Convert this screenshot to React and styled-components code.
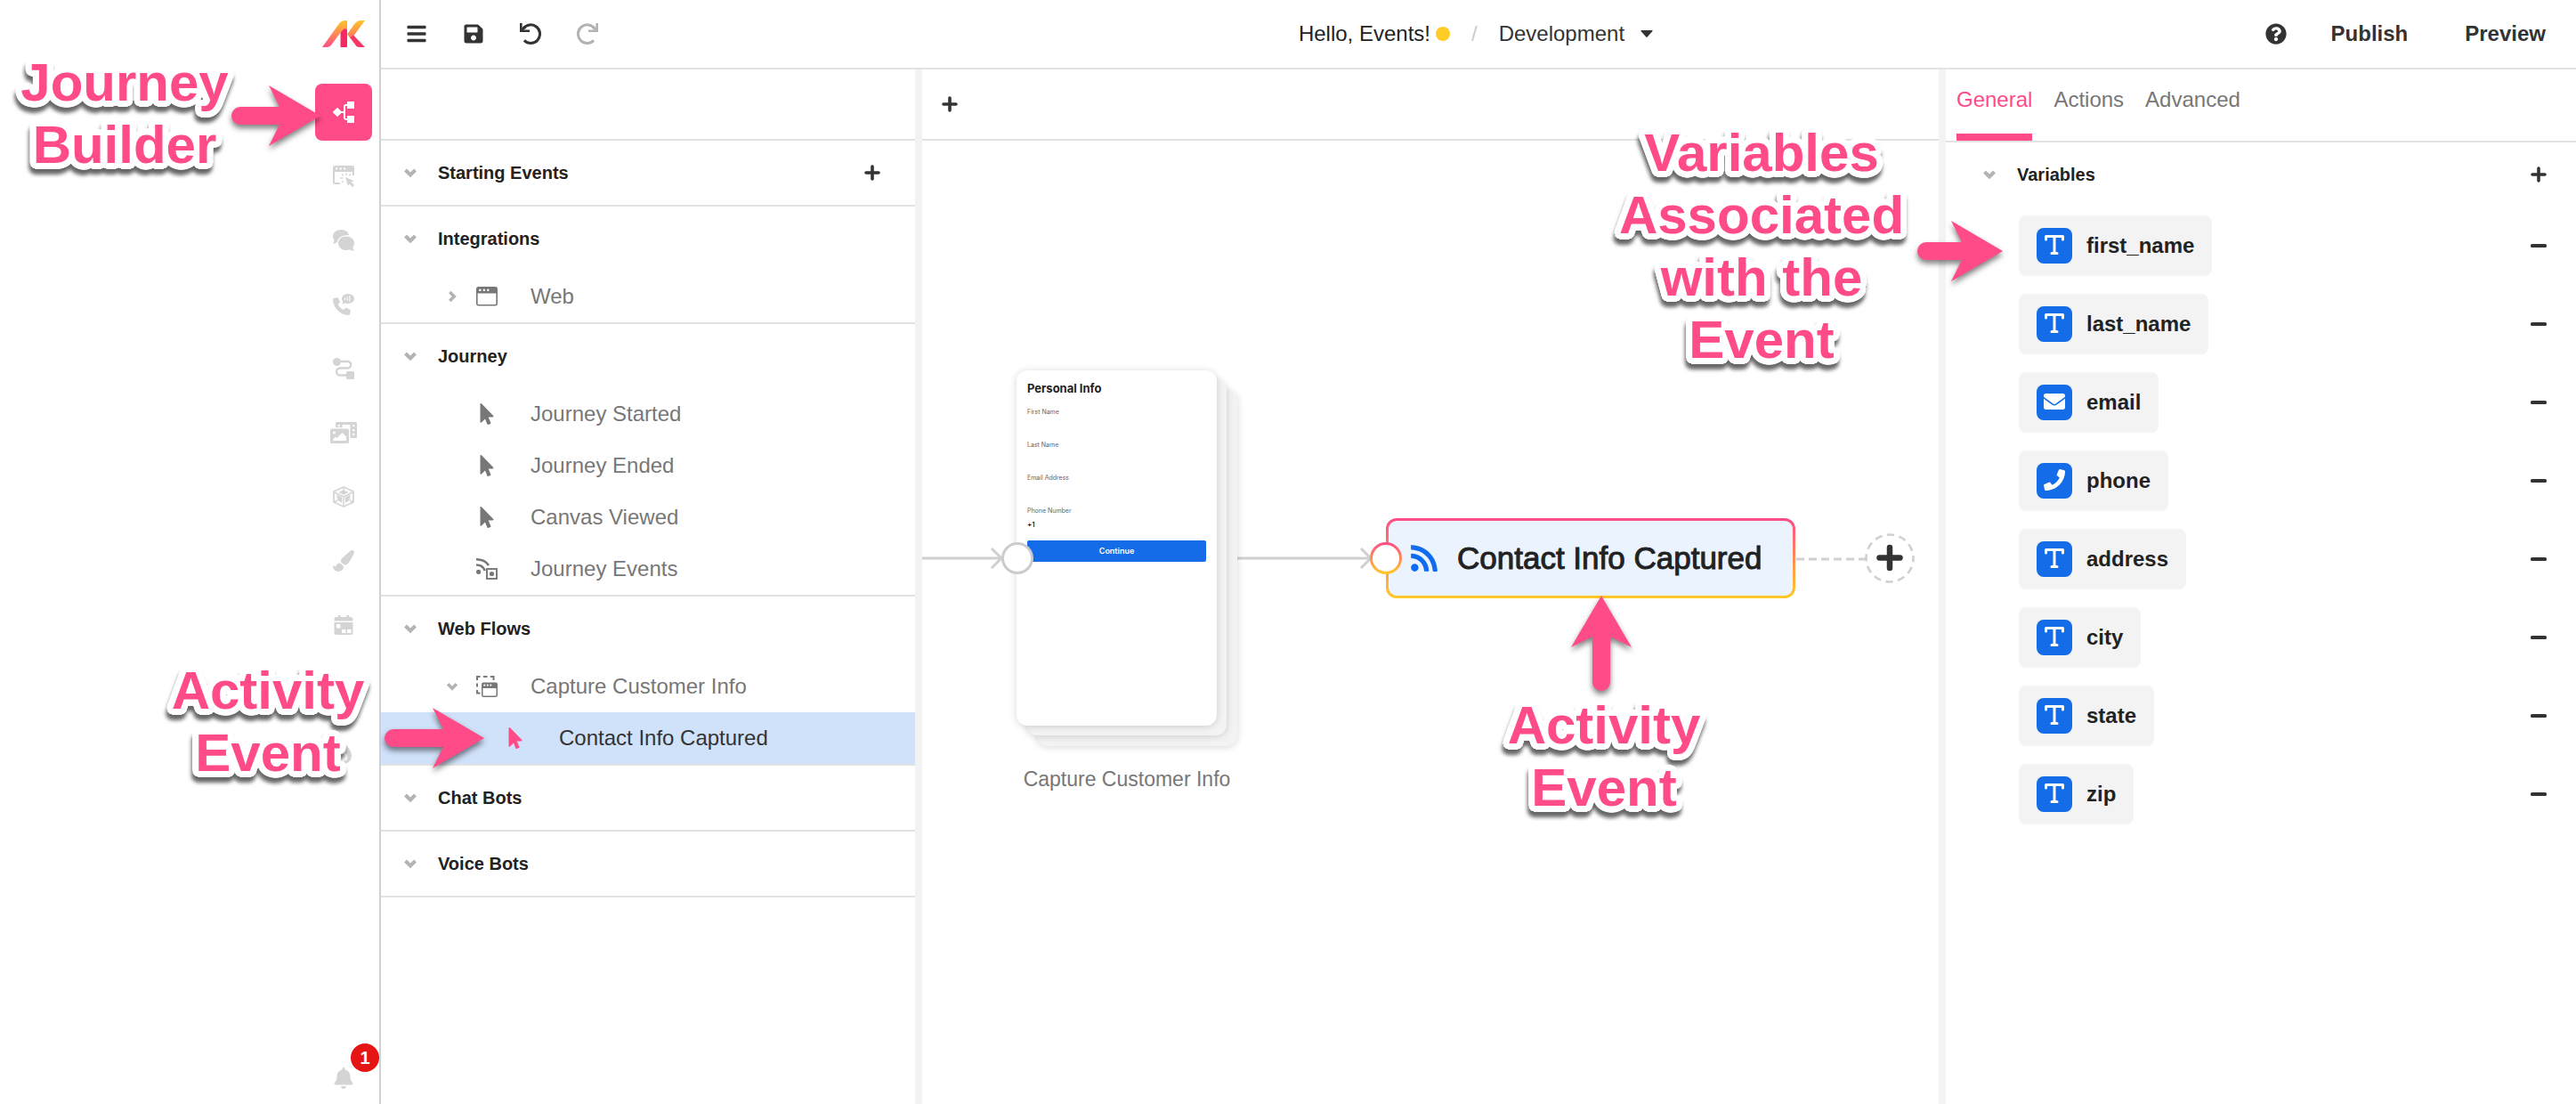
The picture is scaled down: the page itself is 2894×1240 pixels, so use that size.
import React from 'react';
import styled, { createGlobalStyle, css } from 'styled-components';
import {
  FaBars,
  FaBell,
  FaBurn,
  FaEnvelope,
  FaMousePointer,
  FaPaintBrush,
  FaPhone,
  FaPhotoVideo,
  FaQuestionCircle,
  FaRss,
  FaSave,
  FaUsers,
} from 'react-icons/fa';

const color = {
  pink: '#ff4b87',
  yellow: '#ffcb25',
  blue: '#146ce8',
  ink: '#222222',
  text: '#333333',
  muted: '#777777',
  faint: '#b3b3b3',
  rail: '#d4d4d4',
  line: '#e3e3e3',
  wire: '#d0d0d0',
  surface: '#f3f3f3',
};

const GlobalStyle = createGlobalStyle`
  *, *::before, *::after { box-sizing: border-box; }
  body {
    margin: 0;
    background: #fff;
    color: ${color.text};
    font-family: "Liberation Sans", Arial, Helvetica, sans-serif;
    font-size: 24px;
    line-height: 28px;
  }
  button, input, select { font: inherit; color: inherit; }
  button { background: none; border: 0; padding: 0; cursor: pointer; }
  svg { display: block; flex: none; }
`;

/* ---------- page frame ---------- */

const Page = styled.div`
  position: relative;
  display: grid;
  grid-template-columns: 428px minmax(0, 1fr);
  min-height: 100vh;
  overflow: hidden;
`;

const Rail = styled.nav`
  display: flex;
  flex-direction: column;
  align-items: flex-end;
  gap: 8px;
  padding-right: 8px;
  border-right: 2px solid ${color.wire};
`;

const LogoLink = styled.a`
  display: grid;
  place-items: center;
  width: 64px;
  height: 76px;
  margin-bottom: 10px;
`;

const RailButton = styled.button`
  display: grid;
  place-items: center;
  width: 64px;
  height: 64px;
  border-radius: 8px;
  color: ${(p) => (p.$active ? '#fff' : color.rail)};
  background: ${(p) => (p.$active ? color.pink : 'transparent')};
`;

const BellButton = styled(RailButton)`
  position: relative;
  height: 58px;
  margin-top: auto;
`;

const Badge = styled.span`
  position: absolute;
  right: -8px;
  bottom: 36px;
  display: grid;
  place-items: center;
  width: 32px;
  height: 32px;
  border-radius: 50%;
  background: #e51515;
  color: #fff;
  font-size: 20px;
  font-weight: 700;
  line-height: 20px;
`;

const Workspace = styled.div`
  display: flex;
  flex-direction: column;
  min-width: 0;
`;

/* ---------- top bar ---------- */

const TopBar = styled.header`
  display: grid;
  grid-template-columns: 1fr auto 1fr;
  align-items: center;
  height: 78px;
  padding: 0 34px 0 28px;
  border-bottom: 2px solid ${color.line};
`;

const ToolGroup = styled.div`
  display: flex;
  gap: 40px;
`;

const ToolButton = styled.button`
  display: grid;
  place-items: center;
  width: 24px;
  height: 24px;
  color: ${(p) => (p.disabled ? color.faint : color.text)};
`;

const Crumbs = styled.div`
  display: flex;
  align-items: center;
  gap: 24px;
`;

const ProjectName = styled.span`
  display: flex;
  align-items: center;
  gap: 6px;
  color: ${color.ink};

  &::after {
    content: '';
    width: 16px;
    height: 16px;
    border-radius: 50%;
    background: ${color.yellow};
  }
`;

const Slash = styled.span`
  color: #cccccc;
`;

const BranchButton = styled.button`
  display: flex;
  align-items: center;
  gap: 18px;
`;

const TopActions = styled.div`
  display: flex;
  justify-content: flex-end;
  align-items: center;
  gap: 64px;
  font-weight: 700;
`;

const HelpGroup = styled.div`
  display: flex;
  align-items: center;
  gap: 50px;
`;

/* ---------- body ---------- */

const Body = styled.div`
  display: flex;
  flex: 1;
`;

const Gutter = styled.div`
  flex: 0 0 8px;
  background: ${color.surface};
`;

const EventsPanel = styled.aside`
  flex: 0 0 600px;
`;

const Strip = styled.div`
  display: flex;
  align-items: center;
  height: 80px;
  padding-left: 21px;
  border-bottom: 2px solid ${color.line};
`;

const Section = styled.section`
  border-bottom: 2px solid ${color.line};
`;

const SectionHeader = styled.div`
  display: flex;
  align-items: center;
  justify-content: space-between;
  height: 72px;
  padding: 0 ${(p) => p.$right}px 0 ${(p) => p.$left}px;
`;

const SectionToggle = styled.button`
  display: flex;
  align-items: center;
  gap: 22px;
  color: ${color.ink};
  font-size: 20px;
  font-weight: 700;
  line-height: 22px;
`;

const TreeList = styled.ul`
  margin: 0;
  padding: 0;
  list-style: none;
`;

const TreeRow = styled.button`
  display: grid;
  grid-template-columns: 35px 61px 1fr;
  align-items: center;
  width: 100%;
  height: 58px;
  padding-left: ${(p) => (p.$selected ? 104 : 72)}px;
  text-align: left;
  color: ${(p) => (p.$selected ? color.text : color.muted)};
  background: ${(p) => (p.$selected ? '#d0e1fa' : 'transparent')};

  svg { color: ${(p) => (p.$selected ? color.pink : 'inherit')}; }
`;

const IconButton = styled.button`
  color: ${color.text};
`;

/* ---------- canvas ---------- */

const Canvas = styled.main`
  display: flex;
  flex-direction: column;
  flex: 1;
  min-width: 0;
`;

const Stage = styled.div`
  position: relative;
  flex: 1;
`;

const Wires = styled.svg`
  position: absolute;
  inset: 0;
  width: 100%;
  height: 100%;
`;

const FlowNode = styled.figure`
  position: absolute;
  left: 106px;
  top: 258px;
  width: 248px;
  margin: 0;
`;

const FlowStack = styled.div`
  position: relative;
  isolation: isolate;
  width: 225px;
  height: 399px;
`;

const sheet = css`
  border-radius: 12px;
  box-shadow: 0 1px 8px rgba(0, 0, 0, 0.16);
`;

const BackSheet = styled.div`
  ${sheet}
  position: absolute;
  z-index: -1;
  width: 100%;
  height: 100%;
  left: ${(p) => p.$shift}px;
  top: ${(p) => p.$shift}px;
  background: ${color.surface};
`;

const FormSheet = styled.form`
  ${sheet}
  display: flex;
  flex-direction: column;
  height: 100%;
  padding: 12px;
  background: #fff;
  font-family: Inter, "Liberation Sans", sans-serif;
`;

const FormTitle = styled.h3`
  margin: 0 0 15px;
  color: ${color.ink};
  font-size: 13px;
  font-weight: 700;
  line-height: 16px;
`;

const Field = styled.label`
  display: flex;
  flex-direction: column;
  height: 37px;
  color: #666666;
  font-size: 7px;
  line-height: 8px;

  input {
    width: 100%;
    height: 22px;
    padding: 0;
    border: 0;
    outline: 0;
    background: transparent;
    color: #000;
    font-size: 8px;
    font-weight: 500;
  }
`;

const ContinueButton = styled.button`
  height: 24px;
  border-radius: 2px;
  background: ${color.blue};
  color: #fff;
  font-size: 9px;
  font-weight: 600;
  line-height: 12px;
`;

const FlowCaption = styled.figcaption`
  margin-top: 46px;
  text-align: center;
  white-space: nowrap;
  color: ${color.muted};
  font-size: 23px;
  line-height: 28px;
`;

const gradientRing = css`
  border: 3px solid transparent;
  background:
    linear-gradient(${(p) => p.$fill}, ${(p) => p.$fill}) padding-box,
    linear-gradient(${(p) => p.$from}, ${(p) => p.$to}) border-box;
`;

const Port = styled.span`
  ${gradientRing}
  position: absolute;
  left: ${(p) => p.$x}px;
  top: 451px;
  width: 36px;
  height: 36px;
  border-radius: 50%;
`;

const EventNode = styled.button`
  ${gradientRing}
  position: absolute;
  left: 521px;
  top: 424px;
  display: flex;
  align-items: center;
  gap: 20px;
  width: 460px;
  height: 90px;
  padding-left: 23px;
  border-radius: 12px;
  white-space: nowrap;
  color: ${color.ink};
  font-size: 35px;
  line-height: 40px;
  -webkit-text-stroke: 1px ${color.ink};

  svg { color: #0f6cf0; }
`;

const AddStepButton = styled.button`
  position: absolute;
  left: 1059px;
  top: 441px;
`;

/* ---------- inspector ---------- */

const Inspector = styled.aside`
  flex: 0 0 708px;
`;

const Tabs = styled.div`
  display: flex;
  gap: 24px;
  height: 82px;
  padding-left: 12px;
  border-bottom: 2px solid ${color.line};
`;

const Tab = styled.button`
  height: 80px;
  padding-bottom: 4px;
  border-bottom: 8px solid ${(p) => (p.$active ? color.pink : 'transparent')};
  color: ${(p) => (p.$active ? color.pink : color.muted)};
`;

const VariableList = styled.ul`
  display: grid;
  gap: 20px;
  margin: 0;
  padding: 10px 32px 32px 82px;
  list-style: none;
`;

const VariableRow = styled.li`
  display: flex;
  align-items: center;
  justify-content: space-between;
`;

const Chip = styled.button`
  display: flex;
  align-items: center;
  gap: 16px;
  height: 68px;
  padding: 0 20px;
  border-radius: 8px;
  background: ${color.surface};
  color: ${color.ink};
  font-weight: 700;
`;

const ChipIcon = styled.span`
  display: grid;
  place-items: center;
  width: 40px;
  height: 40px;
  padding-bottom: 2px;
  border-radius: 8px;
  background: ${color.blue};
  color: #fff;
`;

/* ---------- annotations ---------- */

/* A ring of hard shadows gives the lettering a white outline with round corners. */
const outline = [3, 5, 7]
  .flatMap((radius) =>
    Array.from({ length: 32 }, (_, i) => {
      const angle = (i / 32) * 2 * Math.PI;
      return `${(Math.cos(angle) * radius).toFixed(2)}px ${(Math.sin(angle) * radius).toFixed(2)}px 0 #fff`;
    })
  )
  .join(', ');

const Callout = styled.p`
  position: absolute;
  left: ${(p) => p.$x}px;
  top: ${(p) => p.$y}px;
  width: 360px;
  margin: 0;
  text-align: center;
  pointer-events: none;
  color: ${color.pink};
  font-size: 60px;
  font-weight: 700;
  line-height: 70px;
  text-shadow: ${outline};
  filter: drop-shadow(-1px 6px 2px rgba(0, 0, 0, 0.6));
`;

const Pointer = styled.svg`
  position: absolute;
  left: ${(p) => p.$x}px;
  top: ${(p) => p.$y}px;
  overflow: visible;
  pointer-events: none;
  filter: drop-shadow(0 4px 3px rgba(0, 0, 0, 0.5));
`;

/* ---------- drawings ---------- */

const Logo = () => (
  <svg width="48" height="30" viewBox="0 0 48 30" aria-hidden="true">
    <defs>
      <linearGradient id="warm" x1="0" y1="0" x2="0" y2="1">
        <stop offset="0" stopColor="#ffc526" />
        <stop offset="1" stopColor="#ff4b87" />
      </linearGradient>
    </defs>
    <path d="M20.500 13L24.500 9H28V30H20.500Z" fill="#f52a62" />
    <path d="M0 30L19 3.500Q21.500 0 26 0H28V11Q27 8.500 24.500 9.500Q23 10 21 13L10.500 27Q8.500 30 5 30Z" fill="url(#warm)" />
    <path d="M28 15.500L37 3Q39.500 0 43 0H48L35.500 17L40 30Q38 29 37 27Z" fill="url(#warm)" />
    <path d="M35 16.500L48 30H42Q39.500 30 38 28L31.500 19Z" fill="#f83567" />
  </svg>
);

const Chevron = ({ size = 18, right = false }) => (
  <svg width={size} height={size} viewBox="0 0 18 18" fill="none" stroke={color.faint} strokeWidth="4" aria-hidden="true">
    <path d={right ? 'M6 3.500L11.500 9L6 14.500' : 'M3.500 6L9 11.500L14.500 6'} />
  </svg>
);

const Plus = () => (
  <svg width="20" height="20" viewBox="0 0 20 20" stroke="currentColor" strokeWidth="3.600" strokeLinecap="round" aria-hidden="true">
    <path d="M3 10H17M10 3V17" />
  </svg>
);

const Minus = () => (
  <svg width="20" height="20" viewBox="0 0 20 20" aria-hidden="true">
    <rect x="1" y="8" width="18" height="4" rx="1.500" fill="currentColor" />
  </svg>
);

const Turn = ({ redo = false }) => (
  <svg width="24" height="24" viewBox="0 0 24 24" fill="none" stroke="currentColor" aria-hidden="true">
    <g transform={redo ? 'matrix(-1 0 0 1 24 0)' : undefined}>
      <path d="M4 6A10.300 10.300 0 1 1 4.900 19.400" strokeWidth="3" />
      <path d="M1.300 0V8.700H11" strokeWidth="2.600" />
      <path d="M2.500 7.500L6 4" strokeWidth="3" />
    </g>
  </svg>
);

const Caret = () => (
  <svg width="14" height="8" viewBox="0 0 14 8" aria-hidden="true">
    <path d="M1 0H13Q14 0 13.500 1L7.700 7.600Q7 8.200 6.300 7.600L0.500 1Q0 0 1 0Z" fill="currentColor" />
  </svg>
);

const JourneyIcon = () => (
  <svg width="24" height="24" viewBox="0 0 24 24" fill="currentColor" aria-hidden="true">
    <path d="M5 7L10 12L5 17L0 12Z" stroke="currentColor" strokeWidth="0.600" strokeLinejoin="round" />
    <rect x="16" width="8" height="8" rx="0.500" />
    <rect x="16" y="16" width="8" height="8" rx="0.500" />
    <path d="M9 12H13M17 4H14.500Q13 4 13 5.500V18.500Q13 20 14.500 20H17" fill="none" stroke="currentColor" strokeWidth="1.800" />
  </svg>
);

const PageClickIcon = () => (
  <svg width="24" height="24" viewBox="0 0 24 24" fill="currentColor" aria-hidden="true">
    <path fillRule="evenodd" d="M2 0H22Q24 0 24 2V11H22V7H2V19H8V21H2Q0 21 0 19V2Q0 0 2 0ZM4.200 2.300a1.200 1.200 0 1 0 .01 0ZM8.700 2.300a1.200 1.200 0 1 0 .01 0ZM13.200 2.300a1.200 1.200 0 1 0 .01 0Z" />
    <path d="M14 13L23.500 17L20.500 18.500L24 22L22 24L18.500 20.500L17 23Z" />
    <path d="M15 8V11M20 9.500L18 11.500M10 9.500L12 11.500M8 14H11M10 19L12 17" fill="none" stroke="currentColor" strokeWidth="1.300" />
  </svg>
);

const ChatIcon = () => (
  <svg width="24" height="24" viewBox="0 0 24 24" fill="currentColor" aria-hidden="true">
    <path d="M9 0C14 0 17.500 2.600 18 6C10.500 5.500 5 9.500 5 14Q2.500 15.800 0 15.500Q1.800 13.500 1.500 11.800Q0 10 0 7.500C0 3.300 4 0 9 0Z" />
    <path d="M15 7.500C20 7.500 24 10.800 24 15Q24 17.500 22.400 19.800Q22.300 22 24 23.800Q21 24 18.800 22.200Q17 23 15 23C10 23 6 19.500 6 15.200C6 10.800 10 7.500 15 7.500Z" />
  </svg>
);

const VoiceIcon = () => (
  <svg width="24" height="24" viewBox="0 0 24 24" fill="currentColor" aria-hidden="true">
    <path d="M1 5L5.500 4L8 9.500L5.500 12Q8 16 11.800 18L14.500 15.500L20 18.300L19 23Q18.500 24 17.500 24C8 23.500 0.500 16 0 6.500Q0 5.300 1 5Z" />
    <path fillRule="evenodd" d="M17 0C21 0 24 2.400 24 5.600C24 8.800 21 11 17 11Q15.500 11 14.300 10.500L10.500 11.500L11.300 8.500Q10 7 10 5.500C10 2.400 13 0 17 0ZM13 4.500V7H14V4.500ZM15.700 3.500V8H16.700V3.500ZM18.400 2V9H19.400V2Z" />
  </svg>
);

const RouteIcon = () => (
  <svg width="24" height="24" viewBox="0 0 24 24" fill="currentColor" aria-hidden="true">
    <circle cx="4.500" cy="4.500" r="4.500" />
    <rect x="15" y="15" width="9" height="9" rx="1.500" />
    <path d="M7 4H16.500A3.200 3.200 0 0 1 16.500 11.500H8A4 4 0 0 0 8 19.500H16" fill="none" stroke="currentColor" strokeWidth="2.400" />
  </svg>
);

const CubeIcon = () => (
  <svg width="24" height="24" viewBox="0 0 24 24" fill="none" stroke="currentColor" strokeLinejoin="round" aria-hidden="true">
    <path d="M12 1L23 6V18L12 23L1 18V6Z" strokeWidth="1.800" />
    <path d="M12 1V5M1 18L5 16M23 18L19 16M2 7L12 12L22 7M12 12V22" strokeWidth="1.400" />
    <path d="M12 4.500L17 7L12 9.500L7 7ZM4.500 10L10 12.700V18.500L5.500 15.500ZM19.500 10L14 12.700V18.500L18.500 15.500Z" fill="currentColor" strokeWidth="0.500" />
  </svg>
);

const CalendarIcon = () => (
  <svg width="22" height="22" viewBox="0 0 22 22" fill="currentColor" aria-hidden="true">
    <path d="M5 0H7.500V2H14.500V0H17V2H19Q21.500 2 21.500 4.500V6.500H0.500V4.500Q0.500 2 3 2H5Z" />
    <path fillRule="evenodd" d="M0.500 8H21.500V19.500Q21.500 22 19 22H3Q0.500 22 0.500 19.500ZM3 10V14.500H7.500V10ZM9 16V20H13.500V16ZM15 16V20H19.500V16Z" />
  </svg>
);

const BrowserIcon = () => (
  <svg width="24" height="24" viewBox="0 0 24 24" fill="currentColor" aria-hidden="true">
    <path fillRule="evenodd" d="M2.500 1H21.500Q24 1 24 3.500V20Q24 22.500 21.500 22.500H2.500Q0 22.500 0 20V3.500Q0 1 2.500 1ZM1.600 8.500V20Q1.600 21 2.600 21H21.400Q22.400 21 22.400 20V8.500ZM4.300 3.500a1.300 1.300 0 1 0 .01 0ZM8.800 3.500a1.300 1.300 0 1 0 .01 0ZM13.300 3.500a1.300 1.300 0 1 0 .01 0Z" />
  </svg>
);

const JourneyEventsIcon = () => (
  <svg width="24" height="24" viewBox="0 0 24 24" fill="none" stroke="currentColor" aria-hidden="true">
    <circle cx="2.600" cy="15.300" r="2.600" fill="currentColor" stroke="none" />
    <path d="M0 1.300Q9.500 1.300 14 8M0 7.500Q7.500 7.500 9.800 14" strokeWidth="2.600" />
    <rect x="12" y="12" width="11" height="11" strokeWidth="1.900" />
    <circle cx="17.500" cy="17.500" r="2.600" fill="currentColor" stroke="none" />
  </svg>
);

const FlowIcon = () => (
  <svg width="24" height="24" viewBox="0 0 24 24" fill="currentColor" aria-hidden="true">
    <path d="M1 5V1H4.500M8 1H12.500M16 1H19.500V5M1 8.500V12.500M1 16V19.500H4.500" fill="none" stroke="currentColor" strokeWidth="2" />
    <path fillRule="evenodd" d="M8 7.500H22Q24 7.500 24 9.500V22Q24 24 22 24H8Q6 24 6 22V9.500Q6 7.500 8 7.500ZM7.500 14V22.500H22.500V14ZM9.300 9.400a1.100 1.100 0 1 0 .01 0ZM12.800 9.400a1.100 1.100 0 1 0 .01 0ZM16.300 9.400a1.100 1.100 0 1 0 .01 0Z" />
  </svg>
);

const TextTypeIcon = () => (
  <svg width="24" height="24" viewBox="0 0 24 24" fill="none" stroke="currentColor" strokeLinejoin="round" strokeLinecap="round" strokeWidth="3" aria-hidden="true">
    <path d="M2.500 6V2.500H21.500V6M12 2.500V21.500M9 21.500H15" />
  </svg>
);

const AddStepIcon = () => (
  <svg width="56" height="56" viewBox="0 0 56 56" fill="none" aria-hidden="true">
    <circle cx="28" cy="28" r="26.500" stroke={color.wire} strokeWidth="2.600" strokeDasharray="8.400 5.475" strokeDashoffset="4" />
    <path d="M28 16V39M16.500 27.500H39.500" stroke={color.text} strokeWidth="6.500" strokeLinecap="round" />
  </svg>
);

const PointerArrow = ({ x, y, length, up = false }) => {
  const shape = `M10 24H${length - 46}L${length - 58} 0L${length} 34L${length - 58} 68L${length - 46} 44H10A10 10 0 0 1 10 24Z`;
  return (
    <Pointer
      $x={x}
      $y={y}
      width={up ? 68 : length}
      height={up ? length : 68}
      viewBox={up ? `0 0 68 ${length}` : `0 0 ${length} 68`}
      fill={color.pink}
      aria-hidden="true"
    >
      <path d={shape} transform={up ? `translate(0 ${length}) rotate(-90)` : undefined} />
    </Pointer>
  );
};

/* ---------- data ---------- */

const railItems = [
  { label: 'Journey Builder', icon: <JourneyIcon />, active: true },
  { label: 'Web flows', icon: <PageClickIcon /> },
  { label: 'Chat bots', icon: <ChatIcon /> },
  { label: 'Voice bots', icon: <VoiceIcon /> },
  { label: 'Routing', icon: <RouteIcon /> },
  { label: 'Media', icon: <FaPhotoVideo size={30} /> },
  { label: 'Models', icon: <CubeIcon /> },
  { label: 'Theme', icon: <FaPaintBrush size={24} /> },
  { label: 'Calendar', icon: <CalendarIcon /> },
  { label: 'Team', icon: <FaUsers size={24} /> },
  { label: 'Activity', icon: <FaBurn size={24} /> },
];

const cursor = <FaMousePointer size={24} />;

const sections = [
  { title: 'Starting Events', addable: true },
  { title: 'Integrations', rows: [{ label: 'Web', icon: <BrowserIcon />, chevron: 'right' }] },
  {
    title: 'Journey',
    rows: [
      { label: 'Journey Started', icon: cursor },
      { label: 'Journey Ended', icon: cursor },
      { label: 'Canvas Viewed', icon: cursor },
      { label: 'Journey Events', icon: <JourneyEventsIcon /> },
    ],
  },
  {
    title: 'Web Flows',
    rows: [
      { label: 'Capture Customer Info', icon: <FlowIcon />, chevron: 'down' },
      { label: 'Contact Info Captured', icon: cursor, selected: true },
    ],
  },
  { title: 'Chat Bots' },
  { title: 'Voice Bots' },
];

const variables = [
  { name: 'first_name' },
  { name: 'last_name' },
  { name: 'email', icon: <FaEnvelope size={24} /> },
  { name: 'phone', icon: <FaPhone size={24} /> },
  { name: 'address' },
  { name: 'city' },
  { name: 'state' },
  { name: 'zip' },
];

const fields = [
  { label: 'First Name' },
  { label: 'Last Name' },
  { label: 'Email Address' },
  { label: 'Phone Number', value: '+1' },
];

/* ---------- app ---------- */

export default function App() {
  return (
    <Page>
      <GlobalStyle />
      <Rail>
        <LogoLink href="#" aria-label="Home"><Logo /></LogoLink>
        {railItems.map((item) => (
          <RailButton key={item.label} $active={item.active} aria-label={item.label}>{item.icon}</RailButton>
        ))}
        <BellButton aria-label="Notifications">
          <FaBell size={24} />
          <Badge>1</Badge>
        </BellButton>
      </Rail>

      <Workspace>
        <TopBar>
          <ToolGroup>
            <ToolButton aria-label="Menu"><FaBars size={24} /></ToolButton>
            <ToolButton aria-label="Save"><FaSave size={24} /></ToolButton>
            <ToolButton aria-label="Undo"><Turn /></ToolButton>
            <ToolButton aria-label="Redo" disabled><Turn redo /></ToolButton>
          </ToolGroup>
          <Crumbs>
            <ProjectName>Hello, Events!</ProjectName>
            <Slash>/</Slash>
            <BranchButton>Development<Caret /></BranchButton>
          </Crumbs>
          <TopActions>
            <HelpGroup>
              <ToolButton aria-label="Help"><FaQuestionCircle size={24} /></ToolButton>
              <button>Publish</button>
            </HelpGroup>
            <button>Preview</button>
          </TopActions>
        </TopBar>

        <Body>
          <EventsPanel>
            <Strip />
            {sections.map((section) => (
              <Section key={section.title}>
                <SectionHeader $left={24} $right={38}>
                  <SectionToggle><Chevron />{section.title}</SectionToggle>
                  {section.addable && <IconButton aria-label="Add starting event"><Plus /></IconButton>}
                </SectionHeader>
                {section.rows && (
                  <TreeList>
                    {section.rows.map((row) => (
                      <li key={row.label}>
                        <TreeRow $selected={row.selected}>
                          <span>{row.chevron && <Chevron size={16} right={row.chevron === 'right'} />}</span>
                          <span>{row.icon}</span>
                          <span>{row.label}</span>
                        </TreeRow>
                      </li>
                    ))}
                  </TreeList>
                )}
              </Section>
            ))}
          </EventsPanel>
          <Gutter />

          <Canvas>
            <Strip><IconButton aria-label="Add tab"><Plus /></IconButton></Strip>
            <Stage>
              <Wires fill="none" stroke={color.wire} strokeWidth="3" aria-hidden="true">
                <path d="M0 469H88M78 458L89 469L78 480" />
                <path d="M353 469H503M493 458L504 469L493 480" />
                <path d="M982 470H1060" strokeDasharray="9 5" />
              </Wires>
              <FlowNode>
                <FlowStack>
                  <BackSheet $shift={23} />
                  <BackSheet $shift={11} />
                  <FormSheet onSubmit={(e) => e.preventDefault()}>
                    <FormTitle>Personal Info</FormTitle>
                    {fields.map((field) => (
                      <Field key={field.label}>
                        {field.label}
                        <input defaultValue={field.value} />
                      </Field>
                    ))}
                    <ContinueButton>Continue</ContinueButton>
                  </FormSheet>
                </FlowStack>
                <FlowCaption>Capture Customer Info</FlowCaption>
              </FlowNode>
              <Port $x={89} $fill="#fff" $from="#cccccc" $to="#cccccc" />
              <EventNode $fill="#ebf3ff" $from={color.pink} $to={color.yellow}>
                <FaRss size={34} />
                Contact Info Captured
              </EventNode>
              <Port $x={503} $fill="#fff" $from={color.pink} $to={color.yellow} />
              <AddStepButton aria-label="Add step"><AddStepIcon /></AddStepButton>
            </Stage>
          </Canvas>
          <Gutter />

          <Inspector>
            <Tabs role="tablist">
              <Tab role="tab" aria-selected="true" $active>General</Tab>
              <Tab role="tab" aria-selected="false">Actions</Tab>
              <Tab role="tab" aria-selected="false">Advanced</Tab>
            </Tabs>
            <SectionHeader $left={40} $right={32}>
              <SectionToggle><Chevron />Variables</SectionToggle>
              <IconButton aria-label="Add variable"><Plus /></IconButton>
            </SectionHeader>
            <VariableList>
              {variables.map((variable) => (
                <VariableRow key={variable.name}>
                  <Chip>
                    <ChipIcon>{variable.icon || <TextTypeIcon />}</ChipIcon>
                    {variable.name}
                  </Chip>
                  <IconButton aria-label={`Remove ${variable.name}`}><Minus /></IconButton>
                </VariableRow>
              ))}
            </VariableList>
          </Inspector>
        </Body>
      </Workspace>

      <Callout $x={-40} $y={58}>Journey<br />Builder</Callout>
      <PointerArrow x={260} y={96} length={100} />
      <Callout $x={121} $y={741}>Activity<br />Event</Callout>
      <PointerArrow x={432} y={795} length={112} />
      <Callout $x={1622} $y={780}>Activity<br />Event</Callout>
      <PointerArrow x={1765} y={669} length={107} up />
      <Callout $x={1799} $y={137}>Variables<br />Associated<br />with the<br />Event</Callout>
      <PointerArrow x={2154} y={248} length={96} />
    </Page>
  );
}
